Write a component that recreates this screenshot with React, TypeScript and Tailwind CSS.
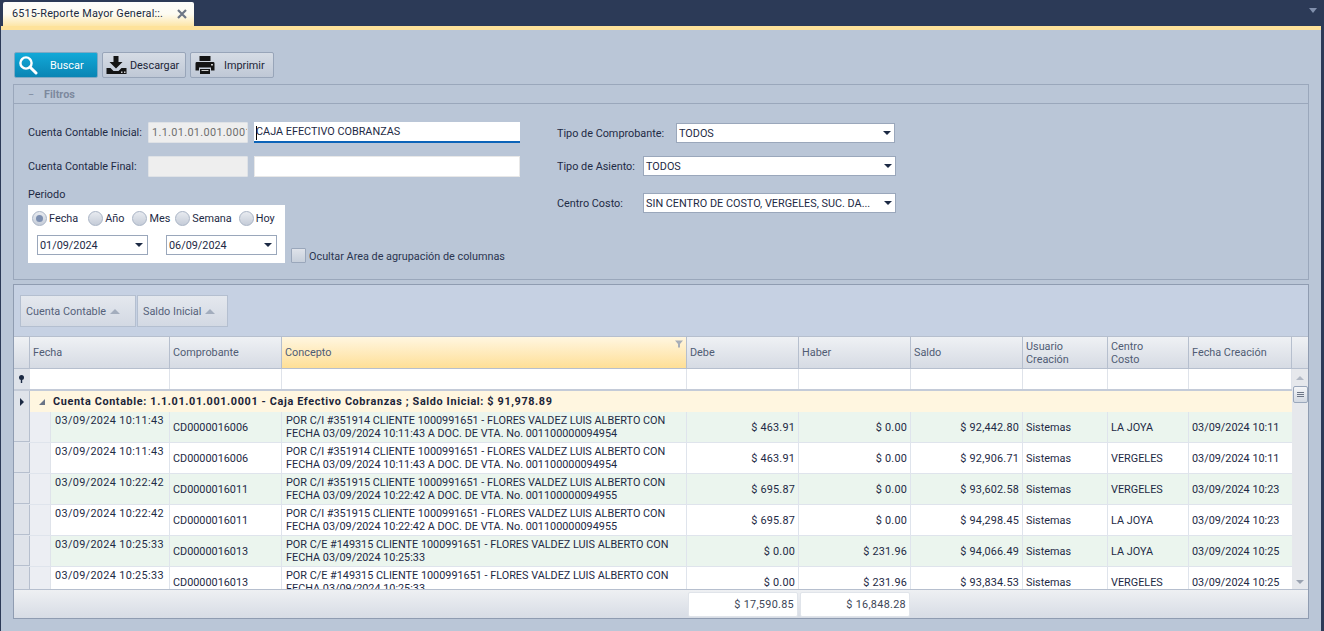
import React from "react";

const colW = ["w-[16px]", "w-[140px]", "w-[112px]", "w-[405px]", "w-[112px]", "w-[112px]", "w-[112px]", "w-[85px]", "w-[81px]", "w-[103px]"];

function Caret() {
  return <span className="h-0 w-0 shrink-0 border-x-[4px] border-t-[4px] border-x-transparent border-t-[#1c2a44]" />;
}

function Select({ value, width, pr = "pr-[3px]" }: { value: string; width: string; pr?: string }) {
  return (
    <div className={`flex h-[20px] items-center justify-between border border-[#9aa7bb] bg-white pl-[2px] ${pr} ${width}`}>
      <span className="whitespace-nowrap pt-[2px]">{value}</span>
      <Caret />
    </div>
  );
}

function Radio({ label, checked, className = "" }: { label: string; checked?: boolean; className?: string }) {
  return (
    <div className={`flex items-center gap-[2px] ${className}`}>
      <span className="flex h-[15px] w-[15px] items-center justify-center rounded-full border border-[#a9b4c5] bg-gradient-to-b from-[#e8ebf0] to-[#c5ccd8]">
        {checked && <span className="h-[7px] w-[7px] rounded-full bg-[#7d8fb0]" />}
      </span>
      <span className="pt-[2px]">{label}</span>
    </div>
  );
}

const rows = [
  ["03/09/2024 10:11:43", "CD0000016006", "POR C/I #351914 CLIENTE 1000991651 - FLORES VALDEZ LUIS ALBERTO CON", "FECHA 03/09/2024 10:11:43 A DOC. DE VTA. No. 001100000094954", "$ 463.91", "$ 0.00", "$ 92,442.80", "LA JOYA", "03/09/2024 10:11"],
  ["03/09/2024 10:11:43", "CD0000016006", "POR C/I #351914 CLIENTE 1000991651 - FLORES VALDEZ LUIS ALBERTO CON", "FECHA 03/09/2024 10:11:43 A DOC. DE VTA. No. 001100000094954", "$ 463.91", "$ 0.00", "$ 92,906.71", "VERGELES", "03/09/2024 10:11"],
  ["03/09/2024 10:22:42", "CD0000016011", "POR C/I #351915 CLIENTE 1000991651 - FLORES VALDEZ LUIS ALBERTO CON", "FECHA 03/09/2024 10:22:42 A DOC. DE VTA. No. 001100000094955", "$ 695.87", "$ 0.00", "$ 93,602.58", "VERGELES", "03/09/2024 10:23"],
  ["03/09/2024 10:22:42", "CD0000016011", "POR C/I #351915 CLIENTE 1000991651 - FLORES VALDEZ LUIS ALBERTO CON", "FECHA 03/09/2024 10:22:42 A DOC. DE VTA. No. 001100000094955", "$ 695.87", "$ 0.00", "$ 94,298.45", "LA JOYA", "03/09/2024 10:23"],
  ["03/09/2024 10:25:33", "CD0000016013", "POR C/E #149315 CLIENTE 1000991651 - FLORES VALDEZ LUIS ALBERTO CON", "FECHA 03/09/2024 10:25:33", "$ 0.00", "$ 231.96", "$ 94,066.49", "LA JOYA", "03/09/2024 10:25"],
  ["03/09/2024 10:25:33", "CD0000016013", "POR C/E #149315 CLIENTE 1000991651 - FLORES VALDEZ LUIS ALBERTO CON", "FECHA 03/09/2024 10:25:33", "$ 0.00", "$ 231.96", "$ 93,834.53", "VERGELES", "03/09/2024 10:25"],
];

const headers: [string, string, string?][] = [
  ["", colW[0]],
  ["Fecha", colW[1]],
  ["Comprobante", colW[2]],
  ["Concepto", colW[3]],
  ["Debe", colW[4]],
  ["Haber", colW[5]],
  ["Saldo", colW[6]],
  ["Usuario", colW[7], "Creación"],
  ["Centro", colW[8], "Costo"],
  ["Fecha Creación", colW[9]],
];

function GroupChip({ label, width }: { label: string; width: string }) {
  return (
    <div className={`flex h-[32px] items-center gap-[4px] border border-[#b4bfd0] bg-gradient-to-b from-[#e4e8ee] to-[#d3d9e3] pl-[5px] text-[#55617a] ${width}`}>
      <span className="pt-[2px]">{label}</span>
      <span className="h-0 w-0 border-x-[5px] border-b-[5px] border-x-transparent border-b-[#a3adbd]" />
    </div>
  );
}

function ToolButton({ children, label, gap }: { children: React.ReactNode; label: string; gap: string }) {
  return (
    <div className={`flex h-[26px] w-[84px] items-center rounded-[2px] border border-[#98a5b9] bg-gradient-to-b from-[#d6dce5] to-[#bfc8d6] pl-[3px] text-[#1c2438] ${gap}`}>
      {children}
      <span className="pt-[2px]">{label}</span>
    </div>
  );
}

export default function App() {
  return (
    <div className="flex h-[631px] w-[1324px] flex-col overflow-hidden bg-[#2c3a57] [font-family:Roboto,sans-serif] text-[10.85px] text-[#1e2a45]">
      {/* tab strip */}
      <div className="flex h-[26px] shrink-0 items-end justify-between pl-[3px] pr-[4px]">
        <div className="flex h-[24px] w-[191px] items-center rounded-t-[2px] bg-gradient-to-b from-[#fdfdfb] via-[#fdfbf2] to-[#fde6a8] pl-[9px] pr-[6px] text-[#202a40]">
          <span className="flex-1 whitespace-nowrap pt-px tracking-[0.18px]">6515-Reporte Mayor General::.</span>
          <svg width="10" height="10" viewBox="0 0 10 10" className="mr-[1px]">
            <path d="M1 1 L9 9 M9 1 L1 9" stroke="#6d7686" strokeWidth="2.2" />
          </svg>
        </div>
        <span className="mb-[13px] mr-[3px] h-0 w-0 border-x-[4px] border-t-[5px] border-x-transparent border-t-[#8190ad]" />
      </div>

      {/* body */}
      <div className="ml-[1px] mr-[3px] flex flex-1 flex-col border-t-[4px] border-[#fee29a] bg-[#bac6d7] px-[12px] pt-[22px]">
        {/* toolbar */}
        <div className="ml-px flex h-[26px] shrink-0 gap-[4px]">
          <div className="flex h-[26px] w-[84px] items-center rounded-[2px] border border-[#7fa9c4] bg-gradient-to-b from-[#12a9d8] to-[#0a85b4] pl-[3px] text-white">
            <svg width="20" height="20" viewBox="0 0 20 20">
              <circle cx="8" cy="8" r="5.6" fill="none" stroke="white" strokeWidth="2.4" />
              <path d="M12.2 12.2 L18 18" stroke="white" strokeWidth="3" strokeLinecap="round" />
            </svg>
            <span className="ml-[12px] pt-[2px]">Buscar</span>
          </div>
          <ToolButton label="Descargar" gap="gap-[3px] pl-[2px]">
            <svg width="21" height="20" viewBox="0 0 21 20" className="shrink-0">
              <path d="M7.5 1 h5 v6 h4 l-6.5 6.5 L3.5 7 h4 z" fill="#141414" />
              <path d="M0.5 13 h4 l3 3 h5 l3 -3 h5 v6 h-20 z" fill="#141414" />
              <rect x="15" y="16.5" width="1.5" height="1.5" fill="#ccc" />
              <rect x="18" y="16.5" width="1.5" height="1.5" fill="#ccc" />
            </svg>
          </ToolButton>
          <ToolButton label="Imprimir" gap="gap-[9px] pl-[4px]">
            <svg width="20" height="20" viewBox="0 0 20 20" className="shrink-0">
              <path d="M4.5 1 h11 v5 h-11 z" fill="#141414" />
              <path d="M1.5 7 h17 a1.5 1.5 0 0 1 1 1.5 v7 h-3.5 v-3 h-12 v3 h-3.5 v-7 a1.5 1.5 0 0 1 1 -1.5 z" fill="#141414" />
              <path d="M5 14 h10 v5 h-10 z" fill="#141414" />
              <rect x="6.5" y="15" width="7" height="1" fill="#ccc" />
              <rect x="16" y="9" width="2" height="1.5" fill="#ccc" />
            </svg>
          </ToolButton>
        </div>

        {/* filters */}
        <div className="mt-[6px] h-[196px] w-[1296px] shrink-0 border border-[#9aa7bb]">
          <div className="flex h-[19px] items-center border-b border-[#9aa7bb] pl-[14px] pt-[2px] font-bold text-[#7d899e]">
            <span className="w-[16px] font-normal">−</span>
            <span>Filtros</span>
          </div>
          <div className="flex pl-[14px] pt-[18px]">
            {/* left */}
            <div className="w-[529px]">
              <div className="flex h-[21px] items-center">
                <span className="w-[120px] whitespace-nowrap pt-[2px]">Cuenta Contable Inicial:</span>
                <div className="flex h-[21px] w-[100px] items-center overflow-hidden whitespace-nowrap rounded-[1px] border border-[#dfe2e6] bg-[#eeeeee] pl-[3px] pt-[2px] tracking-[0.35px] text-[#6f6f6f]">1.1.01.01.001.0001</div>
                <div className="ml-[6px] flex h-[21px] w-[266px] items-center border-b-2 border-[#0b63b8] bg-white pl-[2px] pt-[2px]"><span className="mr-[-1px] h-[14px] w-px bg-black" />CAJA EFECTIVO COBRANZAS</div>
              </div>
              <div className="mt-[13px] flex h-[21px] items-center">
                <span className="w-[120px] whitespace-nowrap pt-[2px]">Cuenta Contable Final:</span>
                <div className="h-[21px] w-[100px] rounded-[1px] border border-[#dfe2e6] bg-[#eeeeee]" />
                <div className="ml-[6px] h-[21px] w-[266px] border border-[#e8e8e8] bg-white" />
              </div>
              <div className="mt-[10px] h-[14px] pt-px leading-[14px]">Periodo</div>
              <div className="mt-[4px] flex items-end">
                <div className="h-[58px] w-[257px] bg-white pl-[4px] pt-[5px]">
                  <div className="flex h-[15px] items-center pt-px">
                    <Radio label="Fecha" checked />
                    <Radio label="Año" className="ml-[10px]" />
                    <Radio label="Mes" className="ml-[8px]" />
                    <Radio label="Semana" className="ml-[5px]" />
                    <Radio label="Hoy" className="ml-[7px]" />
                  </div>
                  <div className="mt-[10px] flex pl-[4px]">
                    <Select value="01/09/2024" width="ml-px w-[111px]" pr="pr-[4px]" />
                    <div className="w-[18px]" />
                    <Select value="06/09/2024" width="w-[111px]" pr="pr-[4px]" />
                  </div>
                </div>
                <div className="mb-[-2px] ml-[5px] flex items-center gap-[3px] text-[#2a3550]">
                  <span className="ml-px h-[15px] w-[15px] rounded-[1px] border border-[#9aa7bb] bg-gradient-to-b from-[#dfe3ea] to-[#c7cfdb]" />
                  <span className="whitespace-nowrap pt-[3px]">Ocultar Area de agrupación de columnas</span>
                </div>
              </div>
            </div>
            {/* right */}
            <div className="pt-px">
              <div className="flex h-[20px] items-center">
                <span className="w-[119px] whitespace-nowrap pt-[2px]">Tipo de Comprobante:</span>
                <Select value="TODOS" width="w-[219px]" />
              </div>
              <div className="mt-[13px] flex h-[20px] items-center">
                <span className="w-[86px] whitespace-nowrap pt-[2px]">Tipo de Asiento:</span>
                <Select value="TODOS" width="w-[253px]" />
              </div>
              <div className="mt-[17px] flex h-[20px] items-center">
                <span className="w-[86px] whitespace-nowrap pt-[2px]">Centro Costo:</span>
                <Select value="SIN CENTRO DE COSTO, VERGELES, SUC. DA..." width="w-[253px]" />
              </div>
            </div>
          </div>
        </div>

        {/* grid */}
        <div className="mt-[4px] flex h-[335px] w-[1296px] shrink-0 flex-col border border-[#8f9cb1] bg-[#c6d1e3]">
          <div className="flex h-[51px] shrink-0 gap-px pl-[6px] pt-[10px]">
            <GroupChip label="Cuenta Contable" width="w-[116px]" />
            <GroupChip label="Saldo Inicial" width="w-[91px]" />
          </div>
          {/* header */}
          <div className="flex h-[33px] shrink-0 border-y border-[#b6bfce] bg-gradient-to-b from-[#eff1f4] to-[#d6dbe4] text-[#505c74]">
            {headers.map(([h, w, second]) => (
              <div
                key={h || "i"}
                className={`relative flex shrink-0 flex-col justify-center border-r border-[#b6bfce] pl-[3px] leading-[13px] ${w} ${second ? "pt-px" : "pb-px"} ${h === "Concepto" ? "bg-gradient-to-b from-[#fff6e0] to-[#fedf96]" : ""}`}
              >
                <span>{h}</span>
                {second && <span>{second}</span>}
                {h === "Concepto" && (
                  <svg width="8" height="8" viewBox="0 0 8 8" className="absolute right-[3px] top-[3px]">
                    <path d="M0 0.5 H8 L5 4 V7.5 H3 V4 Z" fill="#a8aeb8" />
                  </svg>
                )}
              </div>
            ))}
            <div className="flex-1" />
          </div>
          {/* body with scrollbar */}
          <div className="flex h-[220px] shrink-0 overflow-hidden">
            <div className="w-[1278px] shrink-0 overflow-hidden bg-white">
              {/* filter row */}
              <div className="flex h-[22px] border-b-[2px] border-[#c4cbd8]">
                {colW.map((w, i) => (
                  <div key={i} className={`flex shrink-0 items-center justify-center border-r border-[#dfe3ea] ${w} ${i === 0 ? "border-[#b6bfce] bg-[#dfe3ea]" : ""}`}>
                    {i === 0 && (
                      <svg width="7" height="8" viewBox="0 0 7 8">
                        <circle cx="3.5" cy="2.5" r="2.5" fill="#1c2a44" />
                        <path d="M2.8 4 h1.4 v4 h-1.4 z" fill="#1c2a44" />
                      </svg>
                    )}
                  </div>
                ))}
              </div>
              {/* group row */}
              <div className="flex h-[21px] bg-[#fff6e0]">
                <div className="flex w-[16px] shrink-0 items-center justify-center border-r border-[#b6bfce] bg-[#dfe3ea]">
                  <span className="h-0 w-0 border-y-[4px] border-l-[4px] border-y-transparent border-l-[#1c2a44]" />
                </div>
                <svg width="8" height="8" viewBox="0 0 8 8" className="ml-[8px] mt-[7px] shrink-0">
                  <path d="M7 1 V7 H1 Z" fill="#6a7486" />
                </svg>
                <span className="ml-[7px] self-center whitespace-nowrap pt-[2px] font-bold tracking-[0.63px] text-[#1b2438]">Cuenta Contable: 1.1.01.01.001.0001 - Caja Efectivo Cobranzas ; Saldo Inicial: $ 91,978.89</span>
              </div>
              {/* rows */}
              {rows.map((r, i) => (
                <div key={i} className={`flex h-[31px] shrink-0 border-b border-[#dfe4ec] ${i % 2 === 0 ? "bg-[#ebf5ee]" : "bg-white"}`}>
                  <div className="w-[16px] shrink-0 border-b border-r border-[#b6bfce] bg-[#dfe3ea]" />
                  <div className="w-[21px] shrink-0 border-r border-[#dfe3ea] bg-[#eceef3]" />
                  <div className="w-[119px] shrink-0 border-r border-[#dfe4ec] pl-[4px] pt-[2px] leading-[14px] tracking-[0.35px]">{r[0]}</div>
                  <div className="flex w-[112px] shrink-0 items-center border-r border-[#dfe4ec] pl-[3px] pt-[2px]">{r[1]}</div>
                  <div className="flex w-[405px] shrink-0 flex-col justify-center border-r border-[#dfe4ec] pl-[4px] leading-[13px] whitespace-nowrap"><span>{r[2]}</span><span>{r[3]}</span></div>
                  <div className="flex w-[112px] shrink-0 items-center justify-end border-r border-[#dfe4ec] pr-[3px] pt-[2px] tracking-[0.2px]">{r[4]}</div>
                  <div className="flex w-[112px] shrink-0 items-center justify-end border-r border-[#dfe4ec] pr-[3px] pt-[2px] tracking-[0.2px]">{r[5]}</div>
                  <div className="flex w-[112px] shrink-0 items-center justify-end border-r border-[#dfe4ec] pr-[3px] pt-[2px] tracking-[0.2px]">{r[6]}</div>
                  <div className="flex w-[85px] shrink-0 items-center border-r border-[#dfe4ec] pl-[3px] pt-[2px]">Sistemas</div>
                  <div className="flex w-[81px] shrink-0 items-center border-r border-[#dfe4ec] pl-[3px] pt-[2px]">{r[7]}</div>
                  <div className="flex w-[103px] shrink-0 items-center pl-[3px] pt-[2px]">{r[8]}</div>
                </div>
              ))}
            </div>
            {/* scrollbar */}
            <div className="flex flex-1 flex-col items-center justify-between bg-[#e6e8ec] pb-[5px] pt-[7px]">
              <div className="flex w-full flex-col items-center">
                <span className="h-0 w-0 border-x-[4px] border-b-[4px] border-x-transparent border-b-[#b1b8c4]" />
                <div className="mt-[6px] flex h-[17px] w-[15px] flex-col items-center justify-center gap-px rounded-[2px] border border-[#9aa7bb] bg-gradient-to-b from-[#f5f6f8] to-[#d3d9e2]">
                  <span className="h-px w-[7px] bg-[#6d7686]" />
                  <span className="h-px w-[7px] bg-[#6d7686]" />
                  <span className="h-px w-[7px] bg-[#6d7686]" />
                </div>
              </div>
              <span className="h-0 w-0 border-x-[4px] border-t-[4px] border-x-transparent border-t-[#9aa2b0]" />
            </div>
          </div>
          {/* footer */}
          <div className="flex flex-1 border-t border-[#b6bfce] bg-gradient-to-b from-[#eef0f3] to-[#d7dce5] pl-[674px] pt-[2px] tracking-[0.3px] text-[#3d4658]">
            <div className="flex h-[25px] w-[110px] items-center justify-end rounded-[2px] border border-[#e0e4ea] bg-white pr-[3px] pt-[2px]">$ 17,590.85</div>
            <div className="ml-[2px] flex h-[25px] w-[110px] items-center justify-end rounded-[2px] border border-[#e0e4ea] bg-white pr-[3px] pt-[2px]">$ 16,848.28</div>
          </div>
        </div>
      </div>
    </div>
  );
}
